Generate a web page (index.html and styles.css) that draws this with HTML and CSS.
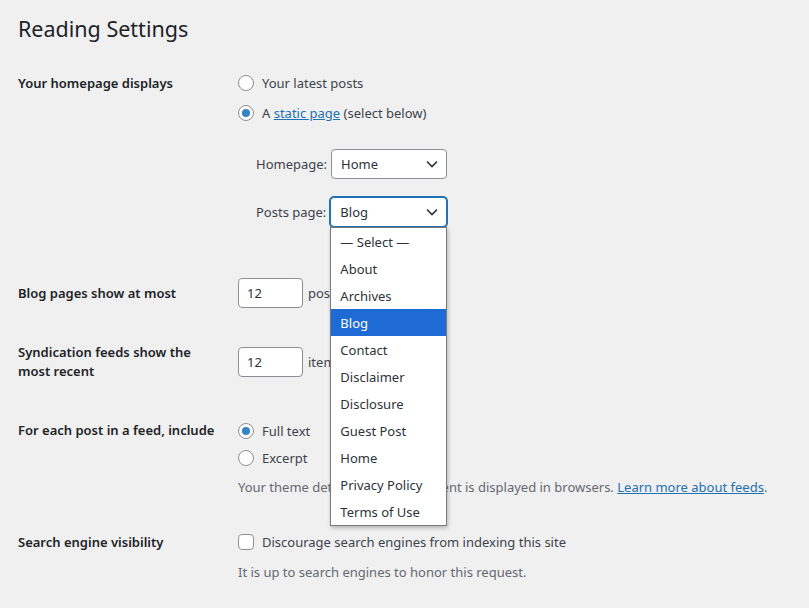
FILE: index.html
```html
<!DOCTYPE html>
<html lang="en">
<head>
<meta charset="utf-8">
<title>Reading Settings</title>
<link rel="stylesheet" href="styles.css">
</head>
<body>
<div class="wrap">
  <h1 class="title">Reading Settings</h1>

  <div class="row row-home">
    <div class="th th-tall">Your homepage displays</div>
    <div class="td">
      <label class="opt opt-30"><span class="radio"></span>Your latest posts</label>
      <label class="opt opt-30"><span class="radio checked"></span>A&nbsp;<a href="#" class="link">static page</a>&nbsp;(select below)</label>
      <div class="sub">
        <div class="subrow">
          <span class="sublabel">Homepage:</span>
          <div class="select w-home"><span class="sel-text">Home</span><svg class="chev" viewBox="0 0 12 8" width="12" height="8"><path d="M1 1.5l5 5 5-5" fill="none" stroke="#2c3338" stroke-width="1.6"/></svg></div>
        </div>
        <div class="subrow subrow-2">
          <span class="sublabel">Posts page:</span>
          <div class="select-wrap">
            <div class="select focused w-posts"><span class="sel-text">Blog</span><svg class="chev" viewBox="0 0 12 8" width="12" height="8"><path d="M1 1.5l5 5 5-5" fill="none" stroke="#2c3338" stroke-width="1.6"/></svg></div>
            <ul class="dropdown">
              <li>— Select —</li>
              <li>About</li>
              <li>Archives</li>
              <li class="active">Blog</li>
              <li>Contact</li>
              <li>Disclaimer</li>
              <li>Disclosure</li>
              <li>Guest Post</li>
              <li>Home</li>
              <li>Privacy Policy</li>
              <li>Terms of Use</li>
            </ul>
          </div>
        </div>
      </div>
    </div>
  </div>

  <div class="row row-blog">
    <div class="th th-tall">Blog pages show at most</div>
    <div class="td inline"><span class="num">12</span><span class="after">posts</span></div>
  </div>

  <div class="row row-synd">
    <div class="th th-two">Syndication feeds show the most recent</div>
    <div class="td inline pad4"><span class="num">12</span><span class="after">items</span></div>
  </div>

  <div class="row row-feed">
    <div class="th th-27">For each post in a feed, include</div>
    <div class="td">
      <label class="opt opt-27"><span class="radio checked"></span>Full text</label>
      <label class="opt opt-27"><span class="radio"></span>Excerpt</label>
      <p class="desc desc-feed">Your theme determines how content is displayed in browsers. <a href="#" class="link">Learn more about feeds</a>.</p>
    </div>
  </div>

  <div class="row row-search">
    <div class="th th-tall">Search engine visibility</div>
    <div class="td">
      <label class="opt opt-30"><span class="checkbox"></span>Discourage search engines from indexing this site</label>
      <p class="desc desc-search">It is up to search engines to honor this request.</p>
    </div>
  </div>
</div>
</body>
</html>
```

FILE: styles.css
```css
html, body {
  margin: 0;
  padding: 0;
  background: #f0f0f1;
}
body {
  font-family: "Noto Sans", "Open Sans", "Liberation Sans", sans-serif;
  font-size: 13px;
  color: #3c434a;
  width: 809px;
  height: 608px;
  overflow: hidden;
}
.wrap {
  padding-left: 18px;
}
.title {
  margin: 0;
  padding-top: 14px;
  font-size: 21.5px;
  font-weight: 400;
  line-height: 30px;
  color: #1d2327;
}
.row {
  display: grid;
  grid-template-columns: 220px 1fr;
}
.th {
  font-weight: 600;
  color: #1d2327;
}
.th-tall { line-height: 30px; }
.th-27 { line-height: 27px; }
.th-two { line-height: 19px; width: 185px; }
.row-home { margin-top: 24px; }
.row-blog { margin-top: 51px; }
.row-synd { margin-top: 35px; }
.row-feed { margin-top: 36px; }
.row-search { margin-top: 30px; }

.opt {
  display: flex;
  align-items: center;
  white-space: nowrap;
}
.opt-30 { height: 30px; }
.opt-27 { height: 27px; }

.radio {
  width: 16px;
  height: 16px;
  box-sizing: border-box;
  border: 1px solid #8c8f94;
  border-radius: 50%;
  background: #fff;
  margin-right: 8px;
  display: inline-flex;
  align-items: center;
  justify-content: center;
  flex: none;
}
.radio.checked::before {
  content: "";
  width: 8px;
  height: 8px;
  border-radius: 50%;
  background: #3582c4;
}
.checkbox {
  width: 16px;
  height: 16px;
  box-sizing: border-box;
  border: 1px solid #8c8f94;
  border-radius: 4px;
  background: #fff;
  margin-right: 8px;
  flex: none;
}
.link {
  color: #2271b1;
  text-decoration: underline;
}

.sub {
  padding-left: 18px;
  margin-top: 21px;
}
.subrow {
  display: flex;
  align-items: center;
  height: 30px;
}
.subrow-2 { margin-top: 18px; }
.sublabel {
  margin-right: 4px;
  color: #3c434a;
}
.select-wrap {
  position: relative;
}
.select {
  box-sizing: border-box;
  height: 30px;
  border: 1px solid #8c8f94;
  border-radius: 4px;
  background: #fff;
  display: flex;
  align-items: center;
  justify-content: space-between;
  padding: 0 8px 0 9px;
  color: #2c3338;
}
.w-home { width: 116px; }
.w-posts { width: 117px; }
.select.focused {
  border-color: #2271b1;
  box-shadow: 0 0 0 1px #2271b1;
}
.chev { flex: none; }

.dropdown {
  position: absolute;
  top: 100%;
  left: 0;
  width: 117px;
  box-sizing: border-box;
  margin: 0;
  padding: 0;
  list-style: none;
  background: #fff;
  border: 1px solid #7a7a7a;
  box-shadow: 1px 2px 4px rgba(0, 0, 0, 0.25);
  z-index: 10;
}
.dropdown li {
  box-sizing: border-box;
  height: 27px;
  line-height: 26px;
  padding: 1px 0 0 9px;
  color: #2c3338;
  white-space: nowrap;
}
.dropdown li.active {
  background: #1e6bd6;
  color: #fff;
}

.inline {
  display: flex;
  align-items: center;
}
.pad4 { padding-top: 4px; align-items: flex-start; }
.num {
  box-sizing: border-box;
  width: 65px;
  height: 30px;
  line-height: 28px;
  border: 1px solid #8c8f94;
  border-radius: 4px;
  background: #fff;
  padding: 0 8px;
  color: #2c3338;
  margin-right: 5px;
  flex: none;
}
.pad4 .after { line-height: 30px; }

.desc {
  margin: 0;
  line-height: 20px;
  color: #646970;
}
.desc-feed { margin-top: 6px; }
.desc-search { margin-top: 5px; }
```
